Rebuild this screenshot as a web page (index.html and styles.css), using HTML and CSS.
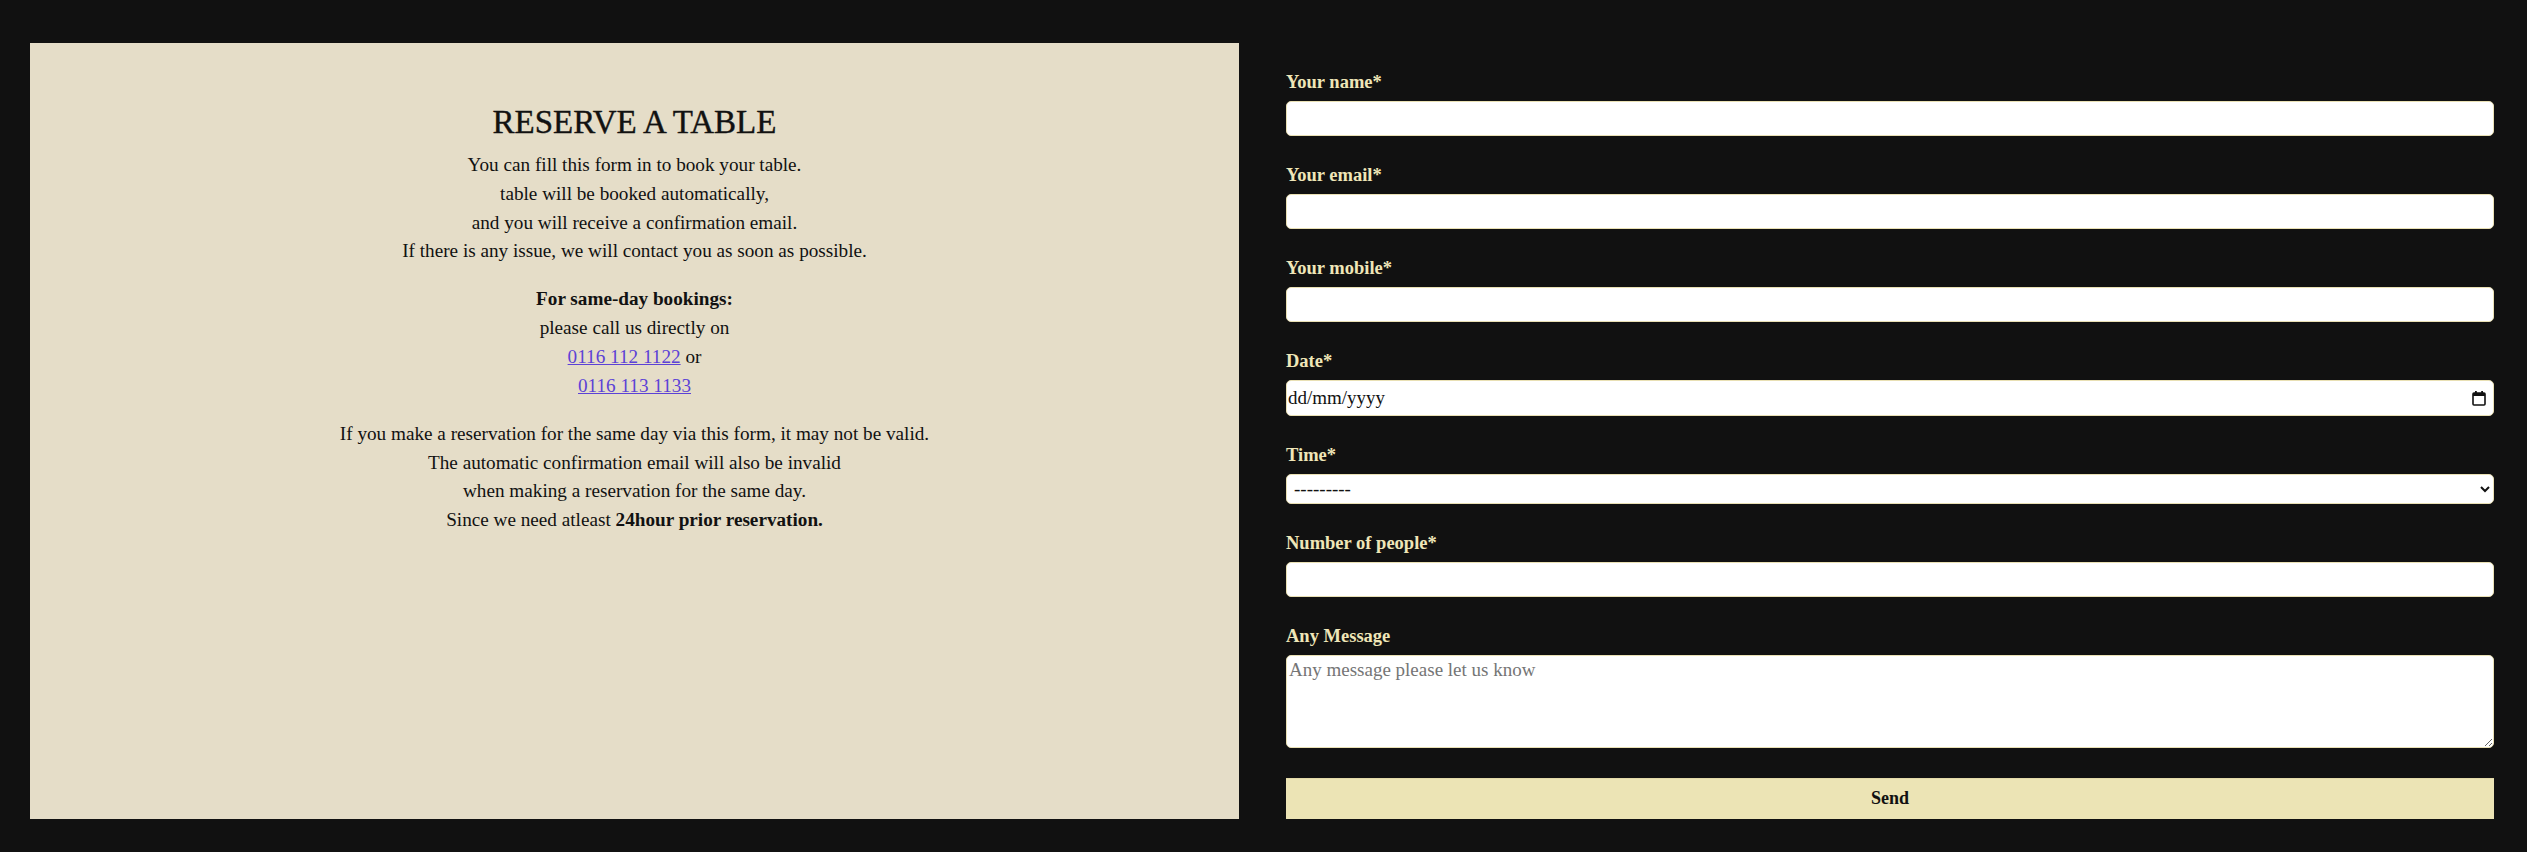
FILE: index.html
```html
<!DOCTYPE html>
<html lang="en-GB">
<head>
<meta charset="utf-8">
<title>Reserve a table</title>
<link rel="stylesheet" href="styles.css">
</head>
<body>
<main class="page">
  <section class="info">
    <h1 class="info-title">RESERVE A TABLE</h1>
    <p>You can fill this form in to book your table.<br>
    table will be booked automatically,<br>
    and you will receive a confirmation email.<br>
    If there is any issue, we will contact you as soon as possible.</p>
    <p><strong>For same-day bookings:</strong><br>
    please call us directly on<br>
    <a href="#">0116 112 1122</a> or<br>
    <a href="#">0116 113 1133</a></p>
    <p>If you make a reservation for the same day via this form, it may not be valid.<br>
    The automatic confirmation email will also be invalid<br>
    when making a reservation for the same day.<br>
    Since we need atleast <strong>24hour prior reservation.</strong></p>
  </section>
  <form class="form">
    <div class="field">
      <label class="label" for="name">Your name*</label>
      <input class="control" id="name" type="text">
    </div>
    <div class="field">
      <label class="label" for="email">Your email*</label>
      <input class="control" id="email" type="email">
    </div>
    <div class="field">
      <label class="label" for="mobile">Your mobile*</label>
      <input class="control" id="mobile" type="tel">
    </div>
    <div class="field">
      <label class="label" for="date">Date*</label>
      <div class="date-wrap">
        <input class="control control-date" id="date" type="text" placeholder="dd/mm/yyyy">
        <svg class="date-icon" width="14" height="16" viewBox="0 0 14 16" aria-hidden="true">
          <rect x="1" y="3" width="12" height="12" rx="1" fill="none" stroke="#111" stroke-width="1.6"/>
          <rect x="1" y="3" width="12" height="3" fill="#111"/>
          <rect x="3" y="1" width="1.8" height="3" fill="#111"/>
          <rect x="9.2" y="1" width="1.8" height="3" fill="#111"/>
        </svg>
      </div>
    </div>
    <div class="field">
      <label class="label" for="time">Time*</label>
      <select class="control control-select" id="time">
        <option>---------</option>
      </select>
    </div>
    <div class="field">
      <label class="label" for="people">Number of people*</label>
      <input class="control" id="people" type="number">
    </div>
    <div class="field">
      <label class="label" for="msg">Any Message</label>
      <textarea class="control control-area" id="msg" placeholder="Any message please let us know"></textarea>
    </div>
    <button class="send" type="button">Send</button>
  </form>
</main>
</body>
</html>
```

FILE: styles.css
```css
html, body {
  margin: 0;
  padding: 0;
  background: #111111;
}

body {
  font-family: "Liberation Serif", "Times New Roman", serif;
}

.page {
  display: grid;
  grid-template-columns: 1209px 1208px;
  column-gap: 47px;
  padding: 43px 33px 34px 30px;
  height: 852px;
  box-sizing: border-box;
}

.info {
  background: #e5ddc8;
  color: #111111;
  text-align: center;
  padding-top: 60px;
  font-size: 19.2px;
  line-height: 1.5;
}

.info-title {
  font-family: "Liberation Serif", "Times New Roman", serif;
  font-weight: normal;
  font-size: 33px;
  line-height: 38px;
  margin: 0 0 10px 0;
  -webkit-text-stroke: 0.4px #111111;
}

.info p {
  margin: 0 0 19.2px 0;
}

.info a {
  color: #5c42d6;
  text-decoration: underline;
}

.form {
  display: flex;
  flex-direction: column;
  padding-top: 28.5px;
}

.field {
  display: flex;
  flex-direction: column;
  margin-bottom: 29px;
}

.label {
  color: #efe6b8;
  font-weight: bold;
  font-size: 18.5px;
  line-height: 21px;
  margin-bottom: 8px;
}

.control {
  box-sizing: border-box;
  width: 100%;
  height: 35px;
  margin: 0;
  background: #ffffff;
  border: 1px solid #e9e0b4;
  border-radius: 5px;
  font-family: "Liberation Serif", "Times New Roman", serif;
  font-size: 19px;
  color: #111111;
  padding: 2px 3px;
  outline: none;
}

.date-wrap {
  position: relative;
}

.control-date {
  height: 36px;
  padding-left: 1px;
}

.control-date::placeholder {
  color: #111111;
}

.date-icon {
  position: absolute;
  right: 8px;
  top: 10px;
}

.control-select {
  height: 30px;
  padding: 0 3px;
  font-size: 19px;
}

.control-area {
  height: 93px;
  resize: vertical;
  padding: 3px 2px;
  display: block;
}

.control-area::placeholder {
  color: #757575;
}

.field:nth-last-of-type(1) {
  margin-bottom: 30px;
}

.send {
  height: 41px;
  width: 100%;
  margin: 0;
  background: #ece4b5;
  border: none;
  border-top: 1px solid #e3d9a8;
  color: #111111;
  font-family: "Liberation Serif", "Times New Roman", serif;
  font-weight: bold;
  font-size: 18px;
  cursor: pointer;
}
```
